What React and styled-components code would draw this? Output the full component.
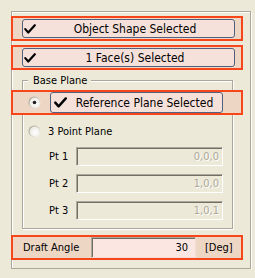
import React from "react";
import styled, { createGlobalStyle } from "styled-components";

const Global = createGlobalStyle`
  html, body { margin: 0; padding: 0; background: #ECE9D8; }
  body { font-family: "DejaVu Sans Condensed", "Liberation Sans", sans-serif; font-size: 11px; color: #000; }
`;

const Panel = styled.div`
  box-sizing: border-box;
  margin: 11px 0 0 11px;
  width: 240px;
  padding: 4px 0 8px 0;
  border: 1px solid #ACA899;
  box-shadow: inset 1px 1px #fff, 1px 1px #fff;
  display: flex;
  flex-direction: column;
`;

const Highlight = styled.div`
  box-sizing: border-box;
  width: 232px;
  height: 25px;
  margin: ${(p) => p.$margin || "0 0 0 -1px"};
  border: 2px solid #F8461C;
  background: #EED6C4;
  display: flex;
  align-items: center;
  padding: ${(p) => p.$pad || "0 6px 0 9px"};
  position: relative;
`;

const CheckButton = styled.div`
  box-sizing: border-box;
  height: ${(p) => p.$h || 19}px;
  width: ${(p) => p.$w}px;
  border: 1px solid #52607F;
  border-radius: 3px;
  background: #F6E1DA;
  display: flex;
  align-items: center;
  padding-left: ${(p) => p.$checkPad || 0}px;
  font-size: 12px;
`;

const ButtonText = styled.span`
  flex: 1;
  text-align: center;
  white-space: nowrap;
  line-height: 14px;
`;

const Group = styled.fieldset`
  box-sizing: border-box;
  margin: 4px 0 0 10px;
  width: 211px;
  padding: 0 0 8px 0;
  border: 1px solid #ACA899;
  box-shadow: inset 1px 1px #fff, 1px 1px #fff;
  min-inline-size: 0;
  display: flex;
  flex-direction: column;
`;

const Legend = styled.legend`
  margin-left: 5px;
  padding: 0 4px 0 5px;
  line-height: 13px;
  font-size: 11px;
  background: #ECE9D8;
`;

const RadioRow = styled.div`
  display: flex;
  align-items: center;
  height: 13px;
  margin: 10px 0 0 5px;
  gap: 7px;
  white-space: nowrap;
`;

const PtRow = styled.div`
  display: flex;
  align-items: center;
  margin: ${(p) => (p.$first ? "9px" : "8px")} 0 0 26px;
`;

const PtLabel = styled.span`
  width: 27px;
`;

const DisabledField = styled.div`
  box-sizing: border-box;
  width: 147px;
  height: 19px;
  border: 1px solid;
  border-color: #ACA899 #fff #fff #ACA899;
  box-shadow: inset 1px 1px #716F64;
  background: #ECE9D8;
  color: #ACA899;
  text-shadow: 1px 1px #fff;
  text-align: right;
  padding: 0 3px;
  line-height: 17px;
`;

const DraftLabel = styled.span`
  width: 68px;
  white-space: nowrap;
`;

const DraftInput = styled.div`
  box-sizing: border-box;
  width: 105px;
  height: 21px;
  border: 1px solid;
  border-color: #ACA899 #F3DCD3 #F3DCD3 #ACA899;
  box-shadow: inset 1px 1px #716F64;
  background: #FCE6E1;
  text-align: right;
  padding: 0 7px;
  line-height: 19px;
`;

const Unit = styled.span`
  margin-left: 9px;
`;

const CheckIcon = ({ ml = 1, size = 12 }) => (
  <svg width={size} height={Math.round(size * 0.85)} viewBox="0 0 13 11" style={{ marginLeft: ml, flex: "none" }}>
    <path d="M1.3 5.6 L4.6 9.4 L11.8 1.4" fill="none" stroke="#000" strokeWidth="2.4" strokeLinecap="round" strokeLinejoin="round" />
  </svg>
);

const Radio = ({ checked }) => (
  <svg width="13" height="13" viewBox="0 0 13 13" style={{ flex: "none" }}>
    <defs>
      <linearGradient id="radEdge" x1="0" y1="0" x2="1" y2="1">
        <stop offset="0" stopColor="#8E8C84" />
        <stop offset="0.55" stopColor="#D8D6CC" />
        <stop offset="1" stopColor="#FFFFFF" />
      </linearGradient>
      <radialGradient id="radFill" cx="0.6" cy="0.6" r="0.6">
        <stop offset="0" stopColor="#FFFFFF" />
        <stop offset="1" stopColor="#ECEAE2" />
      </radialGradient>
    </defs>
    <circle cx="6.5" cy="6.5" r="6" fill="url(#radEdge)" />
    <circle cx="6.5" cy="6.5" r="4.9" fill="url(#radFill)" />
    {checked && <circle cx="6.5" cy="6.5" r="1.8" fill="#1E1E1E" />}
  </svg>
);

export default function App() {
  return (
    <>
      <Global />
      <Panel>
        <Highlight>
          <CheckButton $w={213}>
            <CheckIcon />
            <ButtonText>Object Shape Selected</ButtonText>
          </CheckButton>
        </Highlight>
        <Highlight $margin="4px 0 0 -1px">
          <CheckButton $w={213}>
            <CheckIcon />
            <ButtonText>1 Face(s) Selected</ButtonText>
          </CheckButton>
        </Highlight>
        <Group>
          <Legend>Base Plane</Legend>
          <Highlight $margin="3px 0 0 -12px" $pad="0 0 0 15px">
            <Radio checked />
            <CheckButton $w={173} $h={21} style={{ marginLeft: 9 }}>
              <CheckIcon ml={3} size={13} />
              <ButtonText>Reference Plane Selected</ButtonText>
            </CheckButton>
          </Highlight>
          <RadioRow>
            <Radio />
            <span>3 Point Plane</span>
          </RadioRow>
          <PtRow $first>
            <PtLabel>Pt 1</PtLabel>
            <DisabledField>0,0,0</DisabledField>
          </PtRow>
          <PtRow>
            <PtLabel>Pt 2</PtLabel>
            <DisabledField>1,0,0</DisabledField>
          </PtRow>
          <PtRow>
            <PtLabel>Pt 3</PtLabel>
            <DisabledField>1,0,1</DisabledField>
          </PtRow>
        </Group>
        <Highlight $margin="6px 0 0 -1px" $pad="0 0 0 10px">
          <DraftLabel>Draft Angle</DraftLabel>
          <DraftInput>30</DraftInput>
          <Unit>[Deg]</Unit>
        </Highlight>
      </Panel>
    </>
  );
}
